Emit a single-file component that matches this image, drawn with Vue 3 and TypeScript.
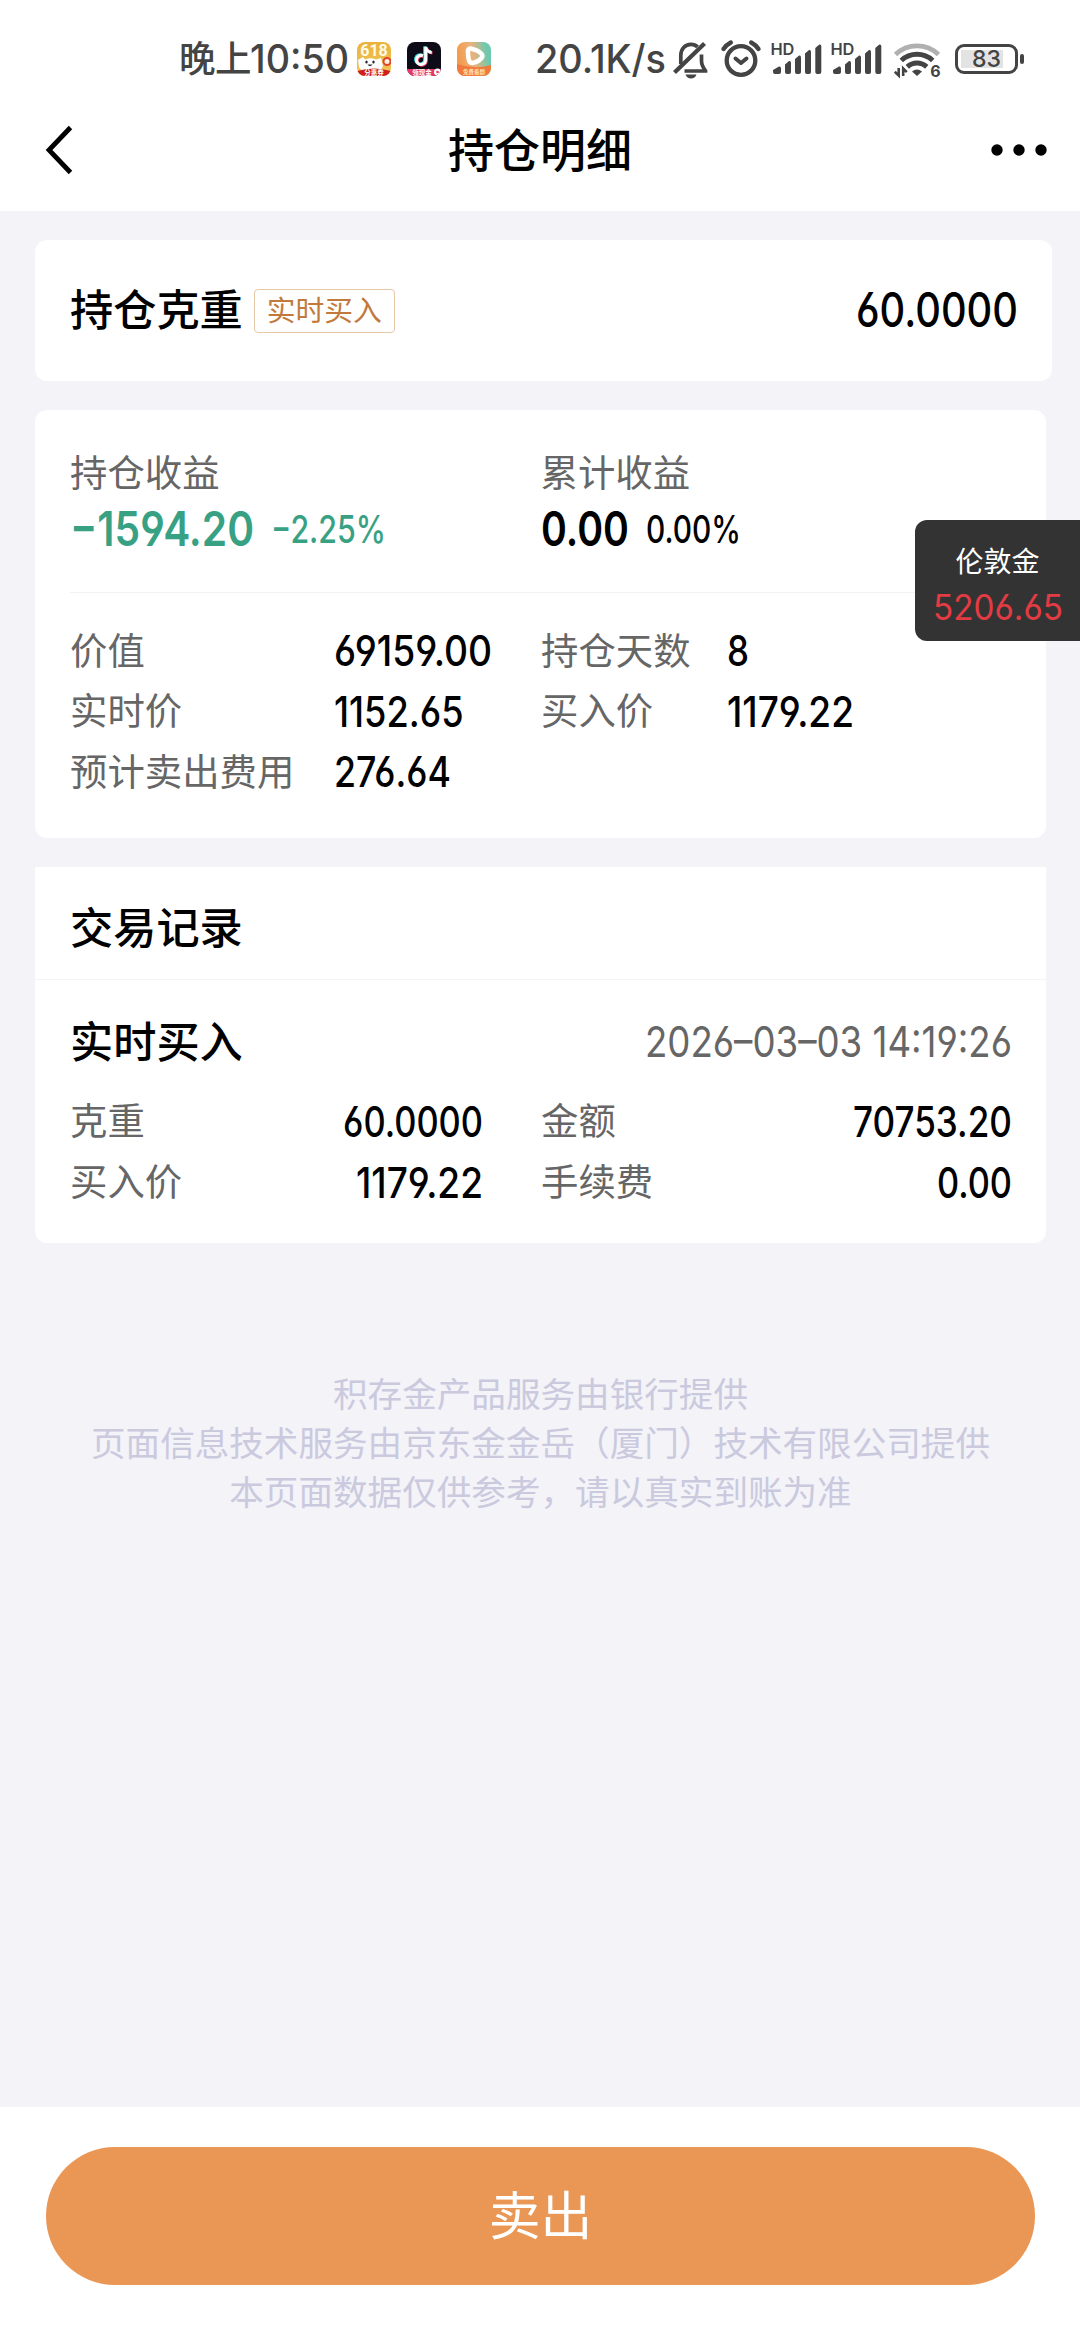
<script setup lang="ts">
import type { Directive } from 'vue'

interface Cell {
  label: string
  value: string
  width: number
}

// Condenses a figure to the given advance width while keeping its height.
const vFit: Directive<HTMLElement, number> = {
  mounted(el, { value }) {
    const natural = el.getBoundingClientRect().width
    if (!natural) return
    el.style.transform = `scaleX(${value / natural})`
    el.style.marginRight = `${value - natural}px`
  },
}

const position: Cell[][] = [
  [
    { label: '价值', value: '69159.00', width: 158 },
    { label: '持仓天数', value: '8', width: 22 },
  ],
  [
    { label: '实时价', value: '1152.65', width: 129.5 },
    { label: '买入价', value: '1179.22', width: 127 },
  ],
  [{ label: '预计卖出费用', value: '276.64', width: 117 }],
]

const record: Cell[][] = [
  [
    { label: '克重', value: '60.0000', width: 140 },
    { label: '金额', value: '70753.20', width: 159 },
  ],
  [
    { label: '买入价', value: '1179.22', width: 127 },
    { label: '手续费', value: '0.00', width: 75 },
  ],
]

const notes: string[] = [
  '积存金产品服务由银行提供',
  '页面信息技术服务由京东金金岳（厦门）技术有限公司提供',
  '本页面数据仅供参考，请以真实到账为准',
]

const bars = [
  { x: 2, y: 24, w: 8 },
  { x: 14, y: 18.5, w: 6 },
  { x: 24, y: 13, w: 6 },
  { x: 34, y: 7.5, w: 6 },
  { x: 44.3, y: 2, w: 6 },
]
</script>

<template>
  <div class="page" lang="zh-CN">
    <header class="header">
      <div class="status">
        <span class="clock"><span class="cjk">晚上</span><span v-fit="99" class="fit">10:50</span></span>
        <div class="apps">
          <svg width="34" height="34" viewBox="0 0 34 34">
            <defs>
              <linearGradient id="gold" x1="0" y1="0" x2="0" y2="1">
                <stop offset="0" stop-color="#e9b23a" />
                <stop offset="1" stop-color="#f2c860" />
              </linearGradient>
              <clipPath id="tile"><rect width="34" height="34" rx="8" /></clipPath>
            </defs>
            <g clip-path="url(#tile)">
              <rect width="34" height="34" fill="url(#gold)" />
              <text x="17" y="14" text-anchor="middle" font-size="16" font-weight="700" fill="#fffbe8" font-family="Roboto, sans-serif">618</text>
              <path d="M1 18l5-3 2 2.500q6-2.500 11 0l5-1.500 2 8-3 5H5l-3-4z" fill="#fff" />
              <ellipse cx="9.500" cy="20" rx="1.200" ry="1.500" fill="#222" />
              <ellipse cx="16.500" cy="20" rx="1.200" ry="1.500" fill="#222" />
              <path d="M10.500 22.500q2.500 3.500 5 0z" fill="#333" />
              <circle cx="30" cy="19.500" r="3.500" fill="#fff1e0" stroke="#e0452c" stroke-width="2" />
              <path d="M0 29q17-5 34 0v5H0z" fill="#cf1f1c" />
              <text x="17" y="33.300" text-anchor="middle" font-size="6.500" font-weight="700" fill="#fff" font-family="'Noto Sans CJK SC', sans-serif">分惠券</text>
            </g>
          </svg>
          <svg width="34" height="34" viewBox="0 0 34 34">
            <g clip-path="url(#tile)">
              <rect width="34" height="34" fill="#0d0b18" />
              <g fill="none" stroke-width="3" stroke-linecap="butt">
                <path d="M16 13.800a4.600 4.600 0 1 0 2.700 4.200V5c.6 3 2.700 5 6 5.400" stroke="#3fe0dc" transform="translate(-1 -.6)" />
                <path d="M16 13.800a4.600 4.600 0 1 0 2.700 4.200V5c.6 3 2.700 5 6 5.400" stroke="#f0345c" transform="translate(.8 .6)" />
                <path d="M16 13.800a4.600 4.600 0 1 0 2.700 4.200V5c.6 3 2.700 5 6 5.400" stroke="#fff" />
              </g>
              <path d="M0 27h34v7H0z" fill="#e8386a" />
              <text x="15" y="33" text-anchor="middle" font-size="6.500" font-weight="700" fill="#fff" font-family="'Noto Sans CJK SC', sans-serif">领现金</text>
              <circle cx="30.500" cy="30" r="3.500" fill="#fff" />
              <circle cx="30.500" cy="30" r="1.300" fill="#e8386a" />
            </g>
          </svg>
          <svg width="34" height="34" viewBox="0 0 34 34">
            <defs>
              <linearGradient id="mix" x1="0" y1=".3" x2="1" y2=".1">
                <stop offset="0" stop-color="#f49a4e" />
                <stop offset=".45" stop-color="#e9b37c" />
                <stop offset=".85" stop-color="#6cc9b0" />
              </linearGradient>
            </defs>
            <g clip-path="url(#tile)">
              <rect width="34" height="34" fill="url(#mix)" />
              <path d="M0 22q17 6 34 1v11H0z" fill="#f0793c" />
              <path d="M11 8.500q.5-2.500 3.500-1.800 8 2 10.500 5.800 1 2-.8 3.800-3.700 3.800-8.200 4.600-3.300.4-4.200-3-1-4.500-.8-9.400z" fill="none" stroke="#fff" stroke-width="4.500" stroke-linejoin="round" />
              <text x="17" y="32" text-anchor="middle" font-size="5.500" font-weight="700" fill="#ffe3b8" font-family="'Noto Sans CJK SC', sans-serif">免费看剧</text>
            </g>
          </svg>
        </div>
        <span class="speed"><span v-fit="131" class="fit">20.1K/s</span></span>
        <svg class="bell" width="36" height="38" viewBox="0 0 36 38" fill="none" stroke="#444" stroke-width="3.700">
          <path d="M7.800 23v-8.500C7.800 8 12 3.300 18 3.300q4 0 6.500 2.600M28.500 13.500V20q0 4.500 4 9.800v.2H11.500" />
          <path d="M1.500 31.500L31.500 2.500" stroke-width="4.300" />
          <path d="M12.500 33.500h11q-1.500 4-5.500 4t-5.500-4z" fill="#444" stroke="none" />
        </svg>
        <svg class="alarm" width="40" height="38" viewBox="0 0 40 38" fill="none" stroke="#444">
          <circle cx="20" cy="20.500" r="14.300" stroke-width="4.300" />
          <path d="M14.500 18.500l5.500 4.500 5.500-4.500" stroke-width="4" stroke-linejoin="round" stroke-linecap="round" />
          <path d="M2.500 9Q5 5 9.800 2.500M37.500 9Q35 5 30.200 2.500" stroke-width="4.400" stroke-linecap="round" />
        </svg>
        <svg v-for="n in 2" :key="n" class="signal" width="51" height="34" viewBox="0 0 51 34">
          <text x="-.6" y="13" font-size="16" font-weight="600" fill="#444" font-family="Inter, sans-serif" textLength="24" lengthAdjust="spacingAndGlyphs">HD</text>
          <path
            v-for="b in bars"
            :key="b.x"
            :d="`M${b.x} 30V${b.y + 4}l${b.w - 2} -3.500q2 -.5 2 2V30q0 2 -2 2h${4 - b.w}q-2 0 -2 -2z`"
            fill="#444"
          />
        </svg>
        <svg class="wifi" width="46" height="36" viewBox="0 0 46 36" fill="none">
          <path d="M1.500 12.500a31 31 0 0 1 43 0" stroke="#b0b0b0" stroke-width="4.800" />
          <path d="M7.300 18.500a23 23 0 0 1 31.400 0" stroke="#444" stroke-width="5" />
          <path d="M13.300 24.800a14.200 14.200 0 0 1 19.400 0" stroke="#444" stroke-width="5" />
          <path d="M18 29.500q5-4 10 0L23 34z" fill="#444" />
          <path d="M4.700 26v7.500L.8 29.800M9.200 34v-7.500l3.600 3.600" stroke="#444" stroke-width="2.600" />
          <text x="36.300" y="35" font-size="16" font-weight="700" fill="#444" font-family="Inter, sans-serif">6</text>
        </svg>
        <div class="battery">
          <div class="cell"><span v-fit="29" class="fit">83</span></div>
          <i class="tip"></i>
        </div>
      </div>
      <nav class="nav">
        <svg width="30" height="52" viewBox="0 0 30 52">
          <path d="M26.500 3.500L5 26l21.500 22.500" fill="none" stroke="#000" stroke-width="4.800" />
        </svg>
        <h1 class="title">持仓明细</h1>
        <svg width="58" height="14" viewBox="0 0 58 14">
          <circle cx="7" cy="7" r="5.700" />
          <circle cx="29" cy="7" r="5.700" />
          <circle cx="51" cy="7" r="5.700" />
        </svg>
      </nav>
    </header>

    <main class="main">
      <section class="card weight">
        <h2 class="heading">持仓克重</h2>
        <span class="tag">实时买入</span>
        <span class="total"><span v-fit="162" class="fit">60.0000</span></span>
      </section>

      <section class="card summary">
        <div class="profits">
          <div class="profit">
            <p class="caption">持仓收益</p>
            <p class="amount loss">
              <span v-fit="184" class="fit big">−1594.20</span>
              <span v-fit="115" class="fit rate">−2.25%</span>
            </p>
          </div>
          <div class="profit">
            <p class="caption">累计收益</p>
            <p class="amount">
              <span v-fit="88" class="fit big">0.00</span>
              <span v-fit="95" class="fit rate">0.00%</span>
            </p>
          </div>
        </div>
        <div class="grid">
          <template v-for="(row, i) in position" :key="i">
            <template v-for="cell in row" :key="cell.label">
              <span class="caption">{{ cell.label }}</span>
              <span class="figure"><span v-fit="cell.width" class="fit">{{ cell.value }}</span></span>
            </template>
          </template>
        </div>
      </section>

      <section class="card records">
        <h2 class="heading records-title">交易记录</h2>
        <div class="entry">
          <div class="entry-head">
            <h3 class="heading">实时买入</h3>
            <time class="time"><span v-fit="367" class="fit">2026–03–03 14:19:26</span></time>
          </div>
          <div v-for="(row, i) in record" :key="i" class="entry-row">
            <div v-for="cell in row" :key="cell.label" class="pair">
              <span class="caption">{{ cell.label }}</span>
              <span class="figure"><span v-fit="cell.width" class="fit">{{ cell.value }}</span></span>
            </div>
          </div>
        </div>
      </section>

      <div class="notes">
        <p v-for="note in notes" :key="note">{{ note }}</p>
      </div>
    </main>

    <footer class="bottom">
      <button class="sell" type="button">卖出</button>
    </footer>

    <aside class="ticker">
      <span class="ticker-name">伦敦金</span>
      <span class="ticker-price"><span v-fit="130" class="fit">5206.65</span></span>
    </aside>
  </div>
</template>

<style>
body {
  margin: 0;
  background: #f3f3f8;
}
</style>

<style scoped>
.page {
  position: relative;
  display: flex;
  flex-direction: column;
  width: 1080px;
  height: 2340px;
  overflow: hidden;
  background: #f3f3f8;
  color: #000;
  font-family: Inter, 'Noto Sans CJK SC', sans-serif;
}

h1,
h2,
h3,
p {
  margin: 0;
  font-weight: 500;
}

svg {
  flex: none;
  display: block;
  overflow: visible;
}

.fit {
  display: inline-block;
  transform-origin: 0 50%;
  white-space: nowrap;
  font-feature-settings: 'case', 'cv03', 'cv04';
}

.header {
  height: 211px;
  flex: none;
  background: #fff;
}

.status {
  display: flex;
  align-items: center;
  height: 118px;
  padding-left: 179px;
  color: #444;
  font-size: 39px;
  line-height: 50px;
  font-weight: 500;
}

.clock {
  display: flex;
  flex: none;
  width: 178px;
}

.cjk {
  flex: none;
  width: 71px;
  font-size: 36.5px;
  letter-spacing: -0.5px;
  white-space: nowrap;
}

.apps {
  display: flex;
  flex: none;
  gap: 16px;
  width: 178px;
}

.speed {
  flex: none;
  width: 138px;
}

.bell {
  margin-top: 1px;
}

.alarm {
  margin-left: 12px;
}

.signal {
  margin-left: 9px;
}

.alarm + .signal {
  margin-left: 10px;
}

.wifi {
  margin-left: 12px;
  margin-top: 1px;
}

.battery {
  display: flex;
  align-items: center;
  gap: 2px;
  margin-left: 15px;
}

.cell {
  box-sizing: border-box;
  width: 63px;
  height: 30px;
  padding-left: 14px;
  border: 3.5px solid #444;
  border-radius: 9px;
  background: linear-gradient(#e3e3e3, #e3e3e3) 3px center / 42px 18px no-repeat;
  font-size: 23.5px;
  line-height: 23px;
}

.tip {
  width: 4px;
  height: 10px;
  border-radius: 2px;
  background: #444;
}

.nav {
  display: flex;
  align-items: center;
  justify-content: space-between;
  height: 64px;
  padding: 0 32px 0 44px;
}

.title {
  margin-left: 16px;
  font-size: 46px;
  line-height: 64px;
}

.main {
  flex: 1;
  padding: 29px 34px 0 35px;
}

.card {
  box-sizing: border-box;
  width: 1011px;
  margin-bottom: 29px;
  border-radius: 12px;
  background: #fff;
}

.heading {
  font-size: 43.2px;
  line-height: 60px;
}

.weight {
  display: flex;
  align-items: center;
  width: 1017px;
  height: 141px;
  padding: 0 34px 2px 35px;
  box-sizing: border-box;
}

.tag {
  box-sizing: border-box;
  width: 141px;
  height: 44px;
  margin: 2px 0 0 11px;
  border: 1px solid #e6c7a6;
  border-radius: 4px;
  color: #c27a3c;
  font-size: 28.8px;
  line-height: 42px;
  text-align: center;
}

.total {
  margin-left: auto;
  font-size: 48.5px;
  line-height: 60px;
  font-weight: 500;
}

.summary {
  height: 428px;
  padding: 37px 35px 0;
}

.profits {
  display: flex;
  height: 145px;
  border-bottom: 1px solid #f2f2f4;
}

.profit {
  width: 471px;
}

.caption {
  color: #666;
  font-size: 37.4px;
  line-height: 54px;
  font-weight: 400;
}

.amount {
  display: flex;
  align-items: center;
  height: 54px;
}

.big {
  font-size: 48px;
  font-weight: 600;
}

.rate {
  margin-left: 17px;
  padding-top: 2px;
  font-size: 38px;
  font-weight: 500;
}

.loss {
  color: #38a184;
}

.grid {
  display: grid;
  grid-template-columns: 264px 207px 186px 1fr;
  grid-auto-rows: 60.5px;
  align-items: center;
  margin-top: 28px;
}

.grid .caption,
.pair .caption {
  padding-top: 1px;
}

.figure {
  font-size: 42.5px;
  line-height: 54px;
  font-weight: 500;
}

.records {
  height: 376px;
  border-radius: 0 0 12px 12px;
}

.records-title {
  box-sizing: border-box;
  height: 113px;
  padding: 31px 35px 0;
  border-bottom: 1px solid #f4f4f6;
}

.entry {
  padding: 32px 34px 0 35px;
}

.entry-head {
  display: flex;
  align-items: center;
  justify-content: space-between;
  height: 60px;
  margin-bottom: 19px;
}

.time {
  color: #666;
  font-size: 42.5px;
  line-height: 60px;
}

.entry-row {
  display: flex;
  justify-content: space-between;
  align-items: center;
  height: 61px;
}

.pair {
  display: flex;
  align-items: center;
  justify-content: space-between;
  width: 413px;
}

.pair + .pair {
  width: 471px;
}

.notes {
  margin-top: 127px;
  color: #cac9de;
  font-size: 34.6px;
  line-height: 49px;
  text-align: center;
  white-space: nowrap;
}

.notes p {
  font-weight: 400;
}

.bottom {
  box-sizing: border-box;
  flex: none;
  height: 233px;
  padding: 40px 45px 0 46px;
  background: #fff;
}

.sell {
  display: block;
  width: 100%;
  height: 138px;
  padding: 0;
  border: 0;
  border-radius: 69px;
  background: #ea9654;
  color: #fff;
  font: 400 51.8px/138px Inter, 'Noto Sans CJK SC', sans-serif;
}

.ticker {
  position: absolute;
  top: 520px;
  right: 0;
  box-sizing: border-box;
  display: flex;
  flex-direction: column;
  align-items: center;
  width: 165px;
  height: 121px;
  padding-top: 21px;
  border-radius: 12px 0 0 12px;
  background: #333;
}

.ticker-name {
  color: #fff;
  font-size: 28px;
  line-height: 42px;
}

.ticker-price {
  color: #e23b43;
  font-size: 35px;
  line-height: 49px;
}
</style>
